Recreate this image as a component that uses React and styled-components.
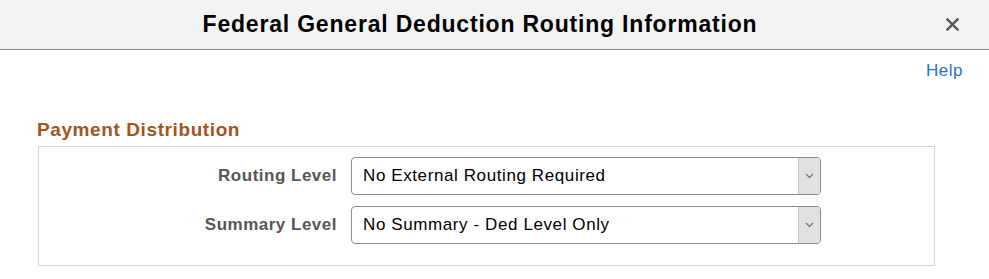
import React from 'react';
import styled, { createGlobalStyle } from 'styled-components';

const rows = [
  { label: 'Routing Level', value: 'No External Routing Required' },
  { label: 'Summary Level', value: 'No Summary - Ded Level Only' },
];

function App() {
  return (
    <>
      <GlobalStyle />
      <Page>
        <TitleBar>
          <Title>Federal General Deduction Routing Information</Title>
          <CloseButton aria-label="Close">
            <svg width="13" height="13" viewBox="0 0 13 13">
              <path d="M1.5 1.5 L11.5 11.5 M11.5 1.5 L1.5 11.5" stroke="#555" strokeWidth="2.4" strokeLinecap="square" />
            </svg>
          </CloseButton>
        </TitleBar>

        <HelpRow>
          <HelpLink href="#">Help</HelpLink>
        </HelpRow>

        <Section>
          <SectionTitle>Payment Distribution</SectionTitle>
          <Box>
            {rows.map((r) => (
              <React.Fragment key={r.label}>
                <Label>{r.label}</Label>
                <Select>
                  <SelectText>{r.value}</SelectText>
                  <Arrow>
                    <svg width="9" height="6" viewBox="0 0 9 6">
                      <path d="M1 1 L4.5 4.5 L8 1" fill="none" stroke="#707070" strokeWidth="1.2" />
                    </svg>
                  </Arrow>
                </Select>
              </React.Fragment>
            ))}
          </Box>
        </Section>
      </Page>
    </>
  );
}

const GlobalStyle = createGlobalStyle`
  body {
    margin: 0;
    background: #fff;
    font-family: "Liberation Sans", Arial, sans-serif;
  }
`;

const Page = styled.div`
  width: 989px;
  height: 279px;
  overflow: hidden;
`;

const TitleBar = styled.div`
  display: grid;
  height: 49px;
  align-items: center;
  background: #f3f3f3;
  border-bottom: 1px solid #7f858b;
`;

const Title = styled.h1`
  grid-area: 1 / 1;
  margin: 0;
  padding-right: 29px;
  text-align: center;
  font-size: 23px;
  letter-spacing: 0.8px;
  font-weight: bold;
  color: #000;
`;

const CloseButton = styled.button`
  grid-area: 1 / 1;
  justify-self: end;
  margin-right: 30px;
  padding: 0;
  border: none;
  background: none;
  display: flex;
  cursor: pointer;
`;

const HelpRow = styled.div`
  display: flex;
  justify-content: flex-end;
  padding: 12px 26px 0 0;
`;

const HelpLink = styled.a`
  font-size: 17px;
  letter-spacing: 0.5px;
  line-height: 18px;
  color: #2b74c8;
  text-decoration: none;
`;

const Section = styled.div`
  margin: 39px 54px 0 38px;
`;

const SectionTitle = styled.h2`
  margin: 0 0 5px -1px;
  font-size: 19px;
  letter-spacing: 0.6px;
  line-height: 22px;
  font-weight: bold;
  color: #a3551b;
`;

const Box = styled.div`
  display: grid;
  grid-template-columns: 298px 470px;
  column-gap: 14px;
  row-gap: 11px;
  align-items: center;
  padding: 10px 0 21px;
  border: 1px solid #d3d6da;
`;

const Label = styled.div`
  text-align: right;
  font-size: 17px;
  letter-spacing: 0.5px;
  font-weight: bold;
  color: #565656;
`;

const Select = styled.div`
  display: flex;
  align-items: stretch;
  height: 38px;
  box-sizing: border-box;
  border: 1px solid #878c91;
  border-radius: 4px;
  overflow: hidden;
  background: #fff;
`;

const SelectText = styled.div`
  flex: 1;
  display: flex;
  align-items: center;
  padding-left: 11px;
  font-size: 17px;
  letter-spacing: 0.6px;
  color: #000;
`;

const Arrow = styled.div`
  width: 21px;
  display: flex;
  align-items: center;
  justify-content: center;
  background: #e1e1e1;
  border-left: 1px solid #c4c4c4;
`;

export default App;
